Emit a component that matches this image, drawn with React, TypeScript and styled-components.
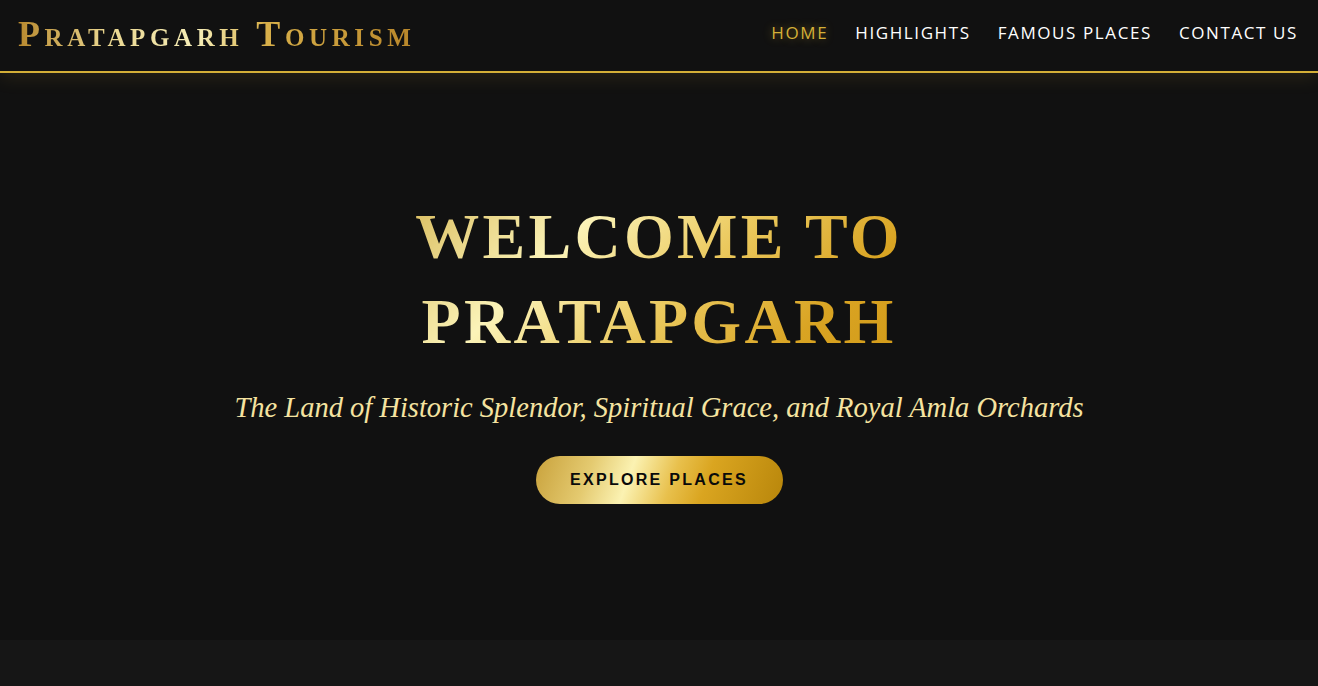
import React from "react";
import styled, { createGlobalStyle } from "styled-components";

const Global = createGlobalStyle`
  html, body { margin: 0; padding: 0; background: #161616; }
  body { font-family: "Liberation Serif", serif; }
  * { box-sizing: border-box; }
`;

const Page = styled.div`
  min-height: 686px;
  background: #161616;
`;

const Header = styled.header`
  height: 73px;
  display: flex;
  align-items: center;
  justify-content: space-between;
  padding: 0 20px 0 18px;
  background: #111111;
  border-bottom: 2px solid #d4af37;
  box-shadow: 0 4px 18px rgba(212, 175, 55, 0.12);
  position: relative;
  z-index: 2;
`;

const Logo = styled.div`
  font-family: "Liberation Serif", serif;
  font-variant: small-caps;
  font-weight: 700;
  font-size: 36px;
  letter-spacing: 4.6px;
  background: linear-gradient(to right, #b8892e 0%, #e9d58e 22%, #f6eeb8 45%, #d8b04a 62%, #b8862a 100%);
  -webkit-background-clip: text;
  background-clip: text;
  color: transparent;
  margin-top: -4px;
`;

const Nav = styled.nav`
  display: flex;
  gap: 27px;
  align-items: center;
  margin-top: -6px;
`;

const NavLink = styled.a<{ $active?: boolean }>`
  font-family: "Open Sans", sans-serif;
  font-size: 17px;
  font-weight: 500;
  letter-spacing: 1.6px;
  text-decoration: none;
  color: ${(p) => (p.$active ? "#d4af37" : "#ffffff")};
  text-shadow: ${(p) => (p.$active ? "0 0 10px rgba(212,175,55,0.45)" : "none")};
`;

const Hero = styled.section`
  height: 567px;
  background: #111111;
  display: flex;
  flex-direction: column;
  align-items: center;
  justify-content: center;
  text-align: center;
  padding-bottom: 15px;
`;

const Title = styled.h1`
  margin: 0;
  font-family: "Liberation Serif", serif;
  font-weight: 700;
  font-size: 64px;
  line-height: 85px;
  letter-spacing: 3.3px;
  text-transform: uppercase;
  background: linear-gradient(135deg, #d9bc5e 0%, #fbf3b8 30%, #ebc95e 55%, #d9a423 80%, #d29a18 100%);
  -webkit-background-clip: text;
  background-clip: text;
  color: transparent;
`;

const Subtitle = styled.p`
  margin: 28px 0 0;
  font-family: "Liberation Serif", serif;
  font-style: italic;
  font-size: 28.5px;
  color: #f5e3a0;
`;

const Button = styled.button`
  margin-top: 32px;
  width: 247px;
  height: 48px;
  border: none;
  border-radius: 24px;
  background: linear-gradient(110deg, #c9a23c 0%, #e4ca70 22%, #fbf2b2 38%, #e8c04c 55%, #daa520 68%, #b8860b 100%);
  font-family: "Liberation Sans", sans-serif;
  font-weight: 700;
  font-size: 16px;
  letter-spacing: 2.3px;
  color: #0a0a0a;
  cursor: pointer;
`;

export default function App() {
  return (
    <Page>
      <Global />
      <Header>
        <Logo>Pratapgarh Tourism</Logo>
        <Nav>
          <NavLink $active href="#">HOME</NavLink>
          <NavLink href="#">HIGHLIGHTS</NavLink>
          <NavLink href="#">FAMOUS PLACES</NavLink>
          <NavLink href="#">CONTACT US</NavLink>
        </Nav>
      </Header>
      <Hero>
        <Title>
          Welcome to
          <br />
          Pratapgarh
        </Title>
        <Subtitle>The Land of Historic Splendor, Spiritual Grace, and Royal Amla Orchards</Subtitle>
        <Button>EXPLORE PLACES</Button>
      </Hero>
    </Page>
  );
}
